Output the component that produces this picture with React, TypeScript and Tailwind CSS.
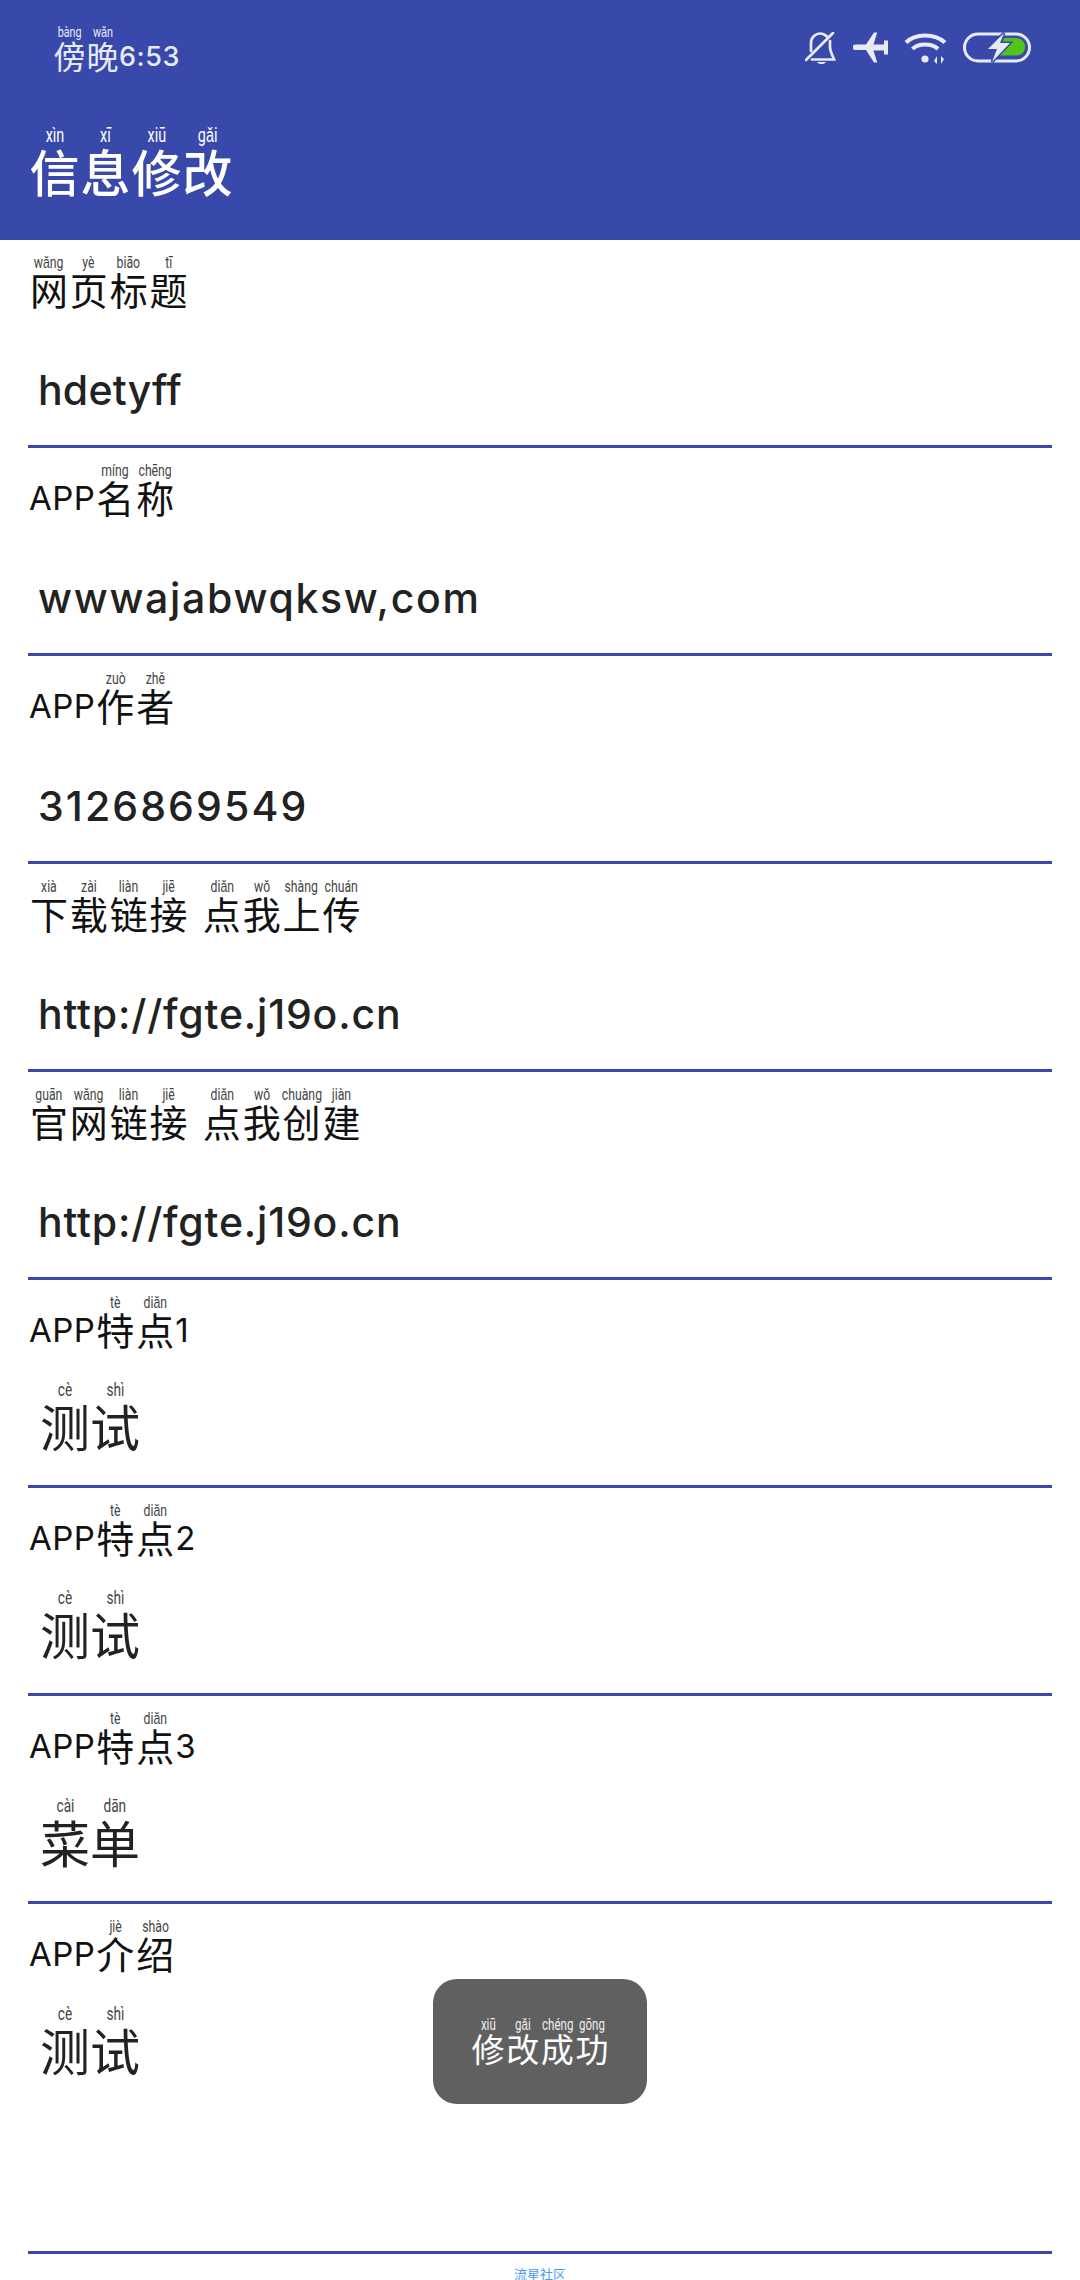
import React from "react";

const CJK = '"Noto Sans CJK SC", sans-serif';

// one character with its pinyin above it
function Py({ c, p, pc, wc, gap }: { c: string; p: string; pc: string; wc: string; gap: string }) {
  return (
    <span className={`inline-flex flex-col items-center ${wc}`}>
      <span className={`whitespace-nowrap scale-x-[0.72] ${pc}`} style={{ fontFamily: "Roboto, sans-serif" }}>
        {p}
      </span>
      <span className={`leading-[1.1em] ${gap}`} style={{ fontFamily: CJK }}>{c}</span>
    </span>
  );
}

type Tok = string | [string, string];

function Line({
  toks,
  className,
  latin = "",
  pc = "text-[17px] leading-[16px] h-[16px] text-[#444]",
  wc = "w-[1.05em]",
  gap = "-mt-[2px]",
}: {
  toks: Tok[];
  className?: string;
  latin?: string;
  pc?: string;
  wc?: string;
  gap?: string;
}) {
  return (
    <div className={`flex items-end ${className ?? ""}`}>
      {toks.map((t, i) =>
        typeof t === "string" ? (
          <span key={i} className={`leading-[1.1em] whitespace-pre ${latin}`} style={{ fontFamily: "Inter, sans-serif" }}>{t}</span>
        ) : (
          <Py key={i} c={t[0]} p={t[1]} pc={pc} wc={wc} gap={gap} />
        )
      )}
    </div>
  );
}

const ROWS: { label: Tok[]; value: Tok[]; track?: string; tall?: boolean }[] = [
  { label: [["网", "wǎng"], ["页", "yè"], ["标", "biāo"], ["题", "tī"]], value: ["hdetyff"], track: "tracking-[0.2px]" },
  { label: ["APP", ["名", "míng"], ["称", "chēng"]], value: ["wwwajabwqksw,com"], track: "tracking-[1.7px]" },
  { label: ["APP", ["作", "zuò"], ["者", "zhě"]], value: ["3126869549"], track: "tracking-[2.1px]" },
  {
    label: [["下", "xià"], ["载", "zài"], ["链", "liàn"], ["接", "jiē"], " \u200A", ["点", "diǎn"], ["我", "wǒ"], ["上", "shàng"], ["传", "chuán"]],
    value: ["http://fgte.j19o.cn"],
    track: "tracking-[0.8px]",
  },
  {
    label: [["官", "guān"], ["网", "wǎng"], ["链", "liàn"], ["接", "jiē"], " \u200A", ["点", "diǎn"], ["我", "wǒ"], ["创", "chuàng"], ["建", "jiàn"]],
    value: ["http://fgte.j19o.cn"],
    track: "tracking-[0.8px]",
  },
  { label: ["APP", ["特", "tè"], ["点", "diǎn"], "1"], value: [["测", "cè"], ["试", "shì"]] },
  { label: ["APP", ["特", "tè"], ["点", "diǎn"], "2"], value: [["测", "cè"], ["试", "shì"]] },
  { label: ["APP", ["特", "tè"], ["点", "diǎn"], "3"], value: [["菜", "cài"], ["单", "dān"]] },
  { label: ["APP", ["介", "jiè"], ["绍", "shào"]], value: [["测", "cè"], ["试", "shì"]], tall: true },
];

function StatusIcons() {
  return (
    <div className="flex items-start gap-[16px] text-[#e8eaf6]">
      {/* bell off */}
      <svg width="32" height="32" viewBox="0 0 32 32" fill="none" stroke="currentColor" strokeWidth="2.7" strokeLinecap="round">
        <path d="M6 19v-8C6 5 11 1.500 15 1.500c3 0 5 1 7 3" />
        <path d="M25 9v6c0 5 2 7 4 12.500H7" />
        <path d="M1 28 28 1" />
        <path d="M12 30h9c-1 1.500-2.500 2-4.500 2s-3.500-.5-4.500-2z" fill="currentColor" stroke="none" />
      </svg>
      {/* airplane */}
      <svg width="35" height="31" viewBox="0 0 35 31" fill="currentColor">
        <path d="M2.500 12.500H13L21 .5h3.200L20.500 12.500H31V8.500h4v14h-4v-4H20.500L24.200 30.500H21L13 18H2.500a2.750 2.750 0 0 1 0-5.500z" />
      </svg>
      {/* wifi */}
      <svg width="43" height="32" viewBox="0 0 43 32" fill="none" stroke="currentColor" strokeWidth="4">
        <path d="M2 10.500C11 1 31 1 41 10.500" />
        <path d="M8.500 17C14 11 28 11 34 17" />
        <circle cx="21" cy="27" r="3.600" fill="currentColor" stroke="none" />
        <path d="M33 24v8l-3-3zM37 32v-8l3 3z" fill="currentColor" stroke="none" />
      </svg>
      {/* battery charging */}
      <svg width="68" height="32" viewBox="0 0 68 32">
        <rect x="1.500" y="2" width="65" height="27" rx="13.500" fill="none" stroke="currentColor" strokeWidth="3" />
        <path d="M41 6h12c5.500 0 9 4 9 9s-4 8.500-9 8.500H35z" fill="#52c41a" />
        <path d="M41 1 25 17h9l-5 13 18-19H37z" fill="currentColor" stroke="#3949ab" strokeWidth="3" paintOrder="stroke" />
      </svg>
    </div>
  );
}

export default function App() {
  return (
    <div className="relative h-[2280px] w-[1080px] overflow-hidden bg-white">
      {/* 顶栏 */}
      <header className="h-[240px] bg-[#3949ab] flex flex-col">
        <div className="flex items-start justify-between h-[110px] pt-[25px] pl-[53px] pr-[49px]">
          <Line
            className="text-[32px] text-[#e8eaf6]"
            latin="text-[27px] tracking-[0.5px] font-medium pb-[2px]"
            pc="text-[15px] leading-[15px] h-[15px] text-[#e8eaf6]"
            wc="w-[33px]"
            toks={[["傍", "bàng"], ["晚", "wǎn"], "6:53"]}
          />
          <div className="pt-[7px]">
            <StatusIcons />
          </div>
        </div>
        <Line
          className="text-[50px] text-white pl-[29px] pt-[16px] font-medium"
          pc="text-[20px] leading-[18px] h-[18px] text-white font-normal"
          gap="-mt-[1px]"
          wc="w-[51px]"
          toks={[["信", "xìn"], ["息", "xī"], ["修", "xiū"], ["改", "gǎi"]]}
        />
      </header>

      {/* 表单 */}
      <main className="mx-[28px]">
        {ROWS.map((r, i) => (
          <div key={i} className={`flex flex-col border-b-[3px] border-[#3949ab] ${r.tall ? "h-[350px]" : "h-[208px]"}`}>
            <Line className="text-[38px] text-[#111] pl-[1px] pt-[11px] h-[70px]" latin="text-[33px] tracking-[0.5px] pb-[2px]" toks={r.label} />
            {r.track ? (
              <Line className={`text-[41px] text-[#222] pl-[10px] pt-[58px] font-medium ${r.track}`} toks={r.value} />
            ) : (
              <Line className="text-[50px] text-[#222] pl-[12px] pt-[31px]" gap="-mt-[1px]" wc="w-[50px]" pc="text-[19px] leading-[18px] h-[18px] text-[#444]" toks={r.value} />
            )}
          </div>
        ))}
      </main>

      <p className="mt-[13px] text-center text-[13px] leading-[14px] text-[#4a9bf0]" style={{ fontFamily: CJK }}>流星社区</p>

      {/* 提示 */}
      <div className="absolute left-[433px] top-[1979px] w-[214px] h-[125px] rounded-[24px] bg-[#606060] flex items-center justify-center">
        <Line
          className="text-[33px] text-white"
          pc="text-[16px] leading-[15px] h-[15px] text-[#eee]"
          toks={[["修", "xiū"], ["改", "gǎi"], ["成", "chéng"], ["功", "gōng"]]}
        />
      </div>
    </div>
  );
}
